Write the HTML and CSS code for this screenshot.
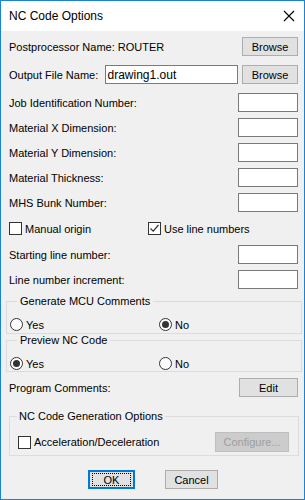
FILE: index.html
```html
<!DOCTYPE html>
<html>
<head>
<meta charset="utf-8">
<link rel="stylesheet" href="styles.css">
</head>
<body>
<div class="window">
  <div class="titlebar">
    <span class="title">NC Code Options</span>
    <svg class="close" width="12" height="12" viewBox="0 0 12 12"><path d="M1 1 L11 11 M11 1 L1 11" stroke="#000" stroke-width="1.1" fill="none"/></svg>
  </div>
  <div class="content">
    <div class="row r-first">
      <span>Postprocessor Name: ROUTER</span>
      <button class="btn browse">Browse</button>
    </div>
    <div class="row r-gap9">
      <span class="out-label">Output File Name:</span>
      <div class="input wide">drawing1.out</div>
      <button class="btn browse push">Browse</button>
    </div>
    <div class="row r-gap9">
      <span>Job Identification Number:</span>
      <div class="input small"></div>
    </div>
    <div class="row r-gap6">
      <span>Material X Dimension:</span>
      <div class="input small"></div>
    </div>
    <div class="row r-gap6">
      <span>Material Y Dimension:</span>
      <div class="input small"></div>
    </div>
    <div class="row r-gap6">
      <span>Material Thickness:</span>
      <div class="input small"></div>
    </div>
    <div class="row r-gap6">
      <span>MHS Bunk Number:</span>
      <div class="input small"></div>
    </div>
    <div class="checkrow">
      <label class="check first"><span class="box"></span>Manual origin</label>
      <label class="check"><span class="box checked"><svg width="11" height="11" viewBox="0 0 11 11"><path d="M1.5 5.5 L4.2 8.2 L9.5 2" stroke="#333" stroke-width="1.2" fill="none"/></svg></span>Use line numbers</label>
    </div>
    <div class="row r-gap9">
      <span>Starting line number:</span>
      <div class="input small"></div>
    </div>
    <div class="row r-gap6">
      <span>Line number increment:</span>
      <div class="input small"></div>
    </div>
    <fieldset class="group g1">
      <legend>Generate MCU Comments</legend>
      <div class="radios">
        <label class="radio first"><span class="circle"></span>Yes</label>
        <label class="radio"><span class="circle on"></span>No</label>
      </div>
    </fieldset>
    <fieldset class="group g2">
      <legend>Preview NC Code</legend>
      <div class="radios">
        <label class="radio first"><span class="circle on"></span>Yes</label>
        <label class="radio"><span class="circle"></span>No</label>
      </div>
    </fieldset>
    <div class="row r-gap6">
      <span>Program Comments:</span>
      <button class="btn edit">Edit</button>
    </div>
    <fieldset class="group g3">
      <legend>NC Code Generation Options</legend>
      <div class="accrow">
        <label class="check"><span class="box"></span>Acceleration/Deceleration</label>
        <button class="btn disabled">Configure...</button>
      </div>
    </fieldset>
    <div class="buttons">
      <button class="btn ok"><span class="focus">OK</span></button>
      <button class="btn cancel">Cancel</button>
    </div>
  </div>
</div>
</body>
</html>
```
FILE: styles.css
```css
* { box-sizing: border-box; }
html, body { margin: 0; padding: 0; background: #f0f0f0; }
body { font-family: "Liberation Sans", Arial, sans-serif; font-size: 11px; color: #000; }
.window {
  width: 305px; height: 500px;
  border: 1px solid #1883d7;
  background: #f0f0f0;
  display: flex; flex-direction: column;
}
.titlebar {
  height: 30px; background: #fff;
  display: flex; align-items: center; justify-content: space-between;
  padding: 0 9px 0 8px;
}
.title { font-size: 12px; }
.close { margin-right: 0; }
.content { padding: 0 6px 0 8px; display: flex; flex-direction: column; }
.row { display: flex; align-items: center; justify-content: space-between; height: 19px; }
.r-first { margin-top: 6px; }
.r-gap9 { margin-top: 9px; }
.r-gap6 { margin-top: 6px; }
.out-label { width: 91px; flex: none; }
.push { margin-left: auto; }
.input {
  background: #fff; border: 1px solid #7a7a7a; height: 19px;
  display: flex; align-items: center; padding-left: 2px;
}
.input.wide { width: 133px; font-size: 12px; }
.input.small { width: 60px; }
.btn {
  font-family: inherit; font-size: 11px; color: #000;
  background: #e1e1e1; border: 1px solid #adadad;
  height: 19px; padding: 0; margin: 0;
  display: flex; align-items: center; justify-content: center;
}
.browse { width: 56px; }
.edit { width: 59px; }
.checkrow { display: flex; align-items: center; height: 15px; margin-top: 9px; }
.check { display: flex; align-items: center; }
.check.first { width: 139px; }
.box {
  width: 13px; height: 13px; border: 1px solid #333; background: #fff;
  margin-right: 3px; display: flex; align-items: center; justify-content: center; flex: none;
}
.group {
  border: 1px solid #dcdcdc; margin: 0; min-width: 0;
}
.group legend { line-height: 13px; padding: 0 3px; }
.g1 { margin: 6px -4px 0 -3px; padding: 10px 0 2px 3px; }
.g1 legend { margin-left: 7px; }
.g2 { margin: 0 -4px 0 -3px; padding: 10px 0 1px 3px; }
.g2 legend { margin-left: 7px; }
.radios { display: flex; align-items: center; height: 13px; }
.radio { display: flex; align-items: center; }
.radio.first { width: 149px; }
.circle {
  width: 13px; height: 13px; border-radius: 50%; border: 1px solid #333;
  background: #fff; margin-right: 3px; display: flex; align-items: center; justify-content: center; flex: none;
}
.circle.on::after {
  content: ""; width: 7px; height: 7px; border-radius: 50%; background: #333;
}
.g3 { margin: 13px -1px 0 0; padding: 9px 9px 3px 8px; }
.g3 legend { margin-left: -1px; padding: 0 2px; }
.accrow { display: flex; align-items: center; justify-content: space-between; height: 20px; }
.btn.disabled { width: 74px; height: 20px; background: #cccccc; border-color: #bfbfbf; color: #9d9d9d; }
.buttons { display: flex; margin-top: 14px; padding-left: 79px; }
.ok { width: 47px; border: 2px solid #0078d7; }
.focus { border: 1px dotted #000; width: 39px; height: 13px; display: flex; align-items: center; justify-content: center; }
.cancel { width: 53px; margin-left: 30px; }
```
